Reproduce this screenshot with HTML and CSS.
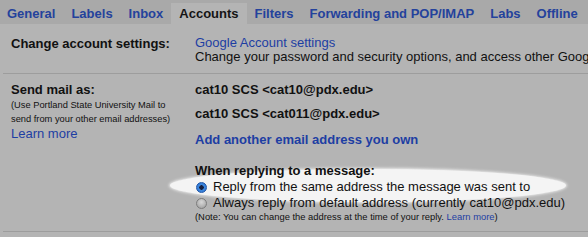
FILE: index.html
```html
<!DOCTYPE html>
<html>
<head>
<meta charset="utf-8">
<link rel="stylesheet" href="styles.css">
</head>
<body>
<div class="tabs">
  <span class="tab first">General</span>
  <span class="tab">Labels</span>
  <span class="tab">Inbox</span>
  <span class="tab active">Accounts</span>
  <span class="tab">Filters</span>
  <span class="tab">Forwarding and POP/IMAP</span>
  <span class="tab">Labs</span>
  <span class="tab">Offline</span>
</div>
<div class="settings">
  <div class="row row-account">
    <div class="label"><b>Change account settings:</b></div>
    <div class="value">
      <div class="link">Google Account settings</div>
      <div class="desc">Change your password and security options, and access other Goog</div>
    </div>
  </div>
  <div class="row row-send">
    <div class="label">
      <div class="title">Send mail as:</div>
      <div class="small">(Use Portland State University Mail to</div>
      <div class="small">send from your other email addresses)</div>
      <div class="link learn">Learn more</div>
    </div>
    <div class="value">
      <div class="addr">cat10 SCS &lt;cat10@pdx.edu&gt;</div>
      <div class="addr addr2">cat10 SCS &lt;cat011@pdx.edu&gt;</div>
      <div class="link add">Add another email address you own</div>
      <div class="when">When replying to a message:</div>
      <div class="options">
        <div class="spot"></div>
        <div class="opt"><span class="radio on"></span>Reply from the same address the message was sent to</div>
        <div class="opt"><span class="radio"></span>Always reply from default address (currently cat10@pdx.edu)</div>
        <div class="note">(Note: You can change the address at the time of your reply. <span class="nlink">Learn more</span>)</div>
      </div>
    </div>
  </div>
</div>
</body>
</html>
```
FILE: styles.css
```css
html, body {
  margin: 0;
  padding: 0;
  background: #b4b4b4;
  width: 588px;
  height: 237px;
  overflow: hidden;
  font-family: "Liberation Sans", Arial, sans-serif;
  color: #111;
}
.tabs {
  display: flex;
  height: 24px;
  padding-top: 3px;
  box-sizing: border-box;
  background: #a9a9a9;
  white-space: nowrap;
}
.tab {
  padding: 0 8px;
  line-height: 21px;
  font-size: 13px;
  font-weight: bold;
  color: #24429c;
}
.tab.first { margin-left: -1px; }
.tab.active {
  background: #b4b4b4;
  color: #151515;
}
.settings {
  padding-left: 3px;
}
.row {
  display: grid;
  grid-template-columns: 184px 1fr;
  padding-left: 8px;
  border-bottom: 1px solid #9d9d9d;
  font-size: 13px;
  white-space: nowrap;
}
.row-account {
  padding-top: 12px;
  padding-bottom: 9px;
  line-height: 14px;
}
.row-account .label { line-height: 15px; }
.link { color: #1d3ea3; }
.value { min-width: 0; }
.row-send {
  padding-top: 8px;
  padding-bottom: 8px;
  line-height: 16px;
}
.title { font-weight: bold; }
.small {
  font-size: 9.3px;
  line-height: 14px;
}
.addr { font-weight: bold; }
.addr2 { margin-top: 8px; }
.add { font-weight: bold; margin-top: 10px; }
.when {
  position: relative;
  z-index: 1;
  font-weight: bold;
  margin-top: 15px;
}
.options { position: relative; }
.spot {
  position: absolute;
  left: -25px;
  top: -10px;
  width: 396px;
  height: 33px;
  border-radius: 50%;
  background: #f4f4f4;
  box-shadow: 0 0 3px 1px #f0f0f0;
}
.opt {
  position: relative;
  display: flex;
  align-items: center;
  line-height: 16px;
  font-size: 13px;
}
.radio {
  width: 11px;
  height: 11px;
  margin: 0 6px 0 1px;
  border-radius: 50%;
  box-sizing: border-box;
  border: 1px solid #7c7c7c;
  background: radial-gradient(circle at 50% 35%, #d8d8d8, #9a9a9a);
  flex: none;
}
.radio.on {
  border-color: #1e55a8;
  background: radial-gradient(circle, #152040 0 2px, #3f8ae0 2.5px, #2a6fcc 100%);
}
.note {
  position: relative;
  font-size: 9.4px;
  line-height: 12px;
}
.nlink { color: #1d3ea3; }
```
